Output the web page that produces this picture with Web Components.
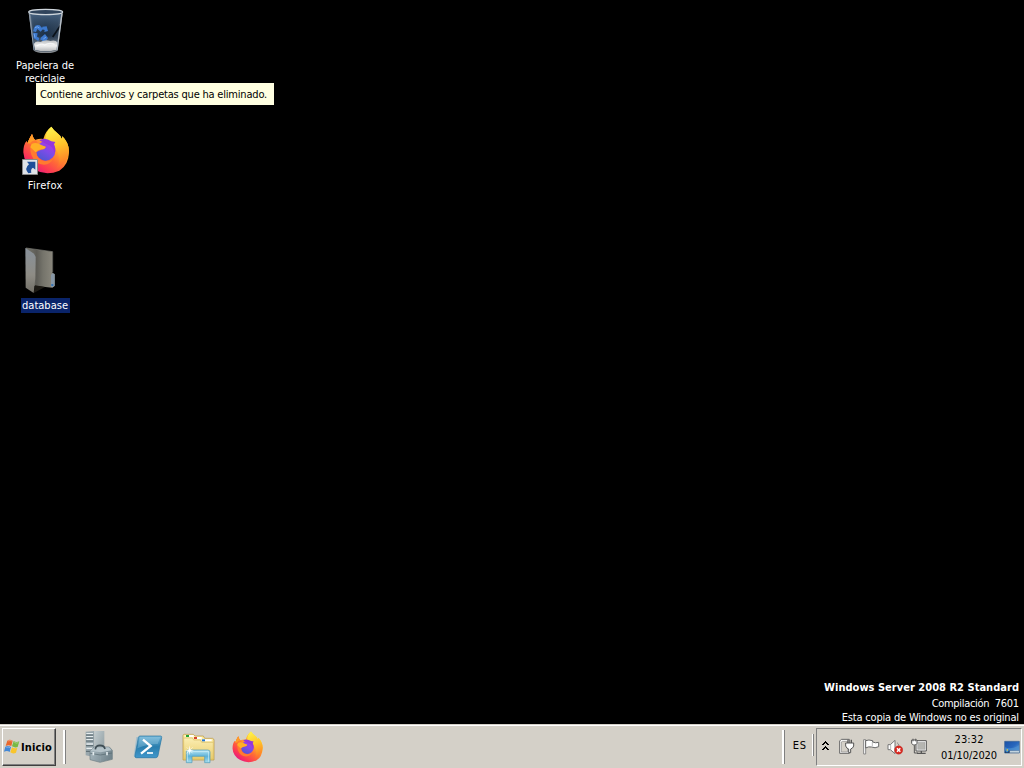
<!DOCTYPE html>
<html lang="es">
<head>
<meta charset="utf-8">
<title>Escritorio</title>
<style>
html,body{margin:0;height:100%;overflow:hidden;background:#000}
body{font:11px/13px "DejaVu Sans Condensed","DejaVu Sans",sans-serif;font-stretch:condensed}
</style>
</head>
<body>
<win-desktop></win-desktop>
<script>
const define=(name,html,ready)=>customElements.define(name,class extends HTMLElement{
  constructor(){super();this.attachShadow({mode:'open'}).innerHTML=html;}
  connectedCallback(){if(ready)ready.call(this);}
});

/* Single line label whose tracking is adjusted to a given advance width. */
define('fit-text','<style>:host{display:block;white-space:pre}span{display:inline-block}</style><span></span>',function(){
  const s=this.shadowRoot.querySelector('span'),t=this.getAttribute('text'),w=+this.getAttribute('width');
  s.textContent=t;
  const n=s.getBoundingClientRect().width;
  const k=(w-n)/t.length;
  s.style.letterSpacing=k+'px';
  s.style.marginRight=(-k)+'px';
});

const icons={
bin:`<svg viewBox="81 24 114 141"><defs>
<linearGradient id="a" x1="0" x2="1"><stop offset="0" stop-color="#8c9db0"/><stop offset=".16" stop-color="#34485e"/><stop offset=".5" stop-color="#1d344d"/><stop offset=".85" stop-color="#3b4c60"/><stop offset="1" stop-color="#9aa4ae"/></linearGradient>
<linearGradient id="b" x2="0" y2="1"><stop offset="0" stop-color="#45607e"/><stop offset=".6" stop-color="#182a3e" stop-opacity=".4"/><stop offset="1" stop-color="#dfe2e4"/></linearGradient>
<linearGradient id="c" x2="0" y2="1"><stop offset="0" stop-color="#b9bcbf"/><stop offset=".5" stop-color="#f0f0f0"/><stop offset="1" stop-color="#b4b6b8"/></linearGradient></defs>
<path d="M86 38L101 151Q104 158 137 158Q169 158 173 151L188 38Z" fill="url(#a)"/><path d="M92 42L106 150H168L183 42Z" fill="url(#b)"/>
<path d="M158 111L182 76" stroke="#0a1119" stroke-width="5"/>
<path d="M102 83Q106 72 119 76L129 87 122 95 112 87 108 96 99 94ZM127 80l13-1 4 14-11 3 1-6-8-2zM100 98l13 2-2 10 7 4-3 9-14-8zM122 113l13-11 9 12-7 11-10 1-1-6-5-1z" fill="#3d79cd"/><path d="M105 83q7-6 13 1M102 101l3 12M130 117l8-6" stroke="#73a8ef" stroke-width="3" fill="none"/>
<path d="M102 131Q108 122 121 126Q137 117 151 123Q167 119 173 128L169 150Q137 158 105 150Z" fill="url(#c)"/><path d="M110 138q12-9 24-3 14-8 30-2" stroke="#fff" stroke-width="4" fill="none" opacity=".7"/>
<path d="M88 41L102 151" stroke="#8d99a6" stroke-width="3"/><path d="M186 41L171 151" stroke="#b4bcc4" stroke-width="4"/>
<ellipse cx="137" cy="36" rx="51" ry="8" fill="#30445c" stroke="#cfd6dc" stroke-width="3.500"/><path d="M101 149Q136 160 173 149Q169 159 137 159Q104 159 101 149Z" fill="#85898d"/></svg>`,
firefox:`<svg viewBox="63 33 150 150"><defs>
<linearGradient id="a" x1=".85" y1=".05" x2=".2" y2=".95"><stop offset="0" stop-color="#fff44f"/><stop offset=".35" stop-color="#ffb329"/><stop offset=".6" stop-color="#ff6b36"/><stop offset=".83" stop-color="#fb3657"/><stop offset="1" stop-color="#e21587"/></linearGradient>
<linearGradient id="b" x1=".8" y1="0" x2=".2" y2="1"><stop offset="0" stop-color="#b833e1"/><stop offset=".5" stop-color="#7c4ce8"/><stop offset="1" stop-color="#4a57cf"/></linearGradient>
<linearGradient id="c" x1=".4" y1="0" x2=".6" y2="1"><stop offset="0" stop-color="#fff14b"/><stop offset=".45" stop-color="#ffc32a"/><stop offset=".8" stop-color="#ff8c28"/><stop offset="1" stop-color="#ff5f38" stop-opacity=".2"/></linearGradient></defs>
<path d="M154 35Q161 46 174 56Q181 60 185 72L187 64Q206 82 207 109Q206 151 178 167Q139 183 105 165Q72 146 70 112Q70 88 80 77L82 85Q88 70 96 57Q99 68 104 75Q120 70 130 72Q136 48 154 35Z" fill="url(#a)"/>
<path d="M154 35Q161 46 174 56Q181 60 185 72L187 64Q206 82 207 109Q205 148 168 163Q190 131 166 100Q162 84 137 76Q135 53 154 35Z" fill="url(#c)"/>
<circle cx="137" cy="108" r="29" fill="url(#b)"/>
<path d="M118 76Q135 65 154 79L166 81 162 88Q169 101 164 117Q162 94 139 87Z" fill="#9437dc"/>
<path d="M96 57Q99 69 106 76Q115 82 112 92L137 95Q137 102 124 104Q114 107 109 112Q111 134 132 138Q148 140 160 131Q152 147 132 149Q104 147 94 119Q88 101 94 88L82 85Q88 70 96 57Z" fill="#ff7a30"/><path d="M95 87Q108 79 124 90L137 95Q137 102 124 103Q112 105 107 112L91 97Z" fill="#ffaf25"/>
<path d="M96 57Q99 69 106 76Q95 77 89 85L82 85Q88 70 96 57Z" fill="#ff9c28"/></svg>`,
shortcut:`<svg viewBox="0 0 48 48"><path fill="#dfe3e8" stroke="#888" stroke-width="3" d="M1.500 1.500h45v45H1.500z"/><path d="M15 8H40V32L33 26Q25 30 28 41L19 43Q6 28 21 16Z" fill="#1e4f99"/></svg>`,
folder:`<svg viewBox="72 33 102 150"><defs><linearGradient id="a" x2="1"><stop offset="0" stop-color="#77776f"/><stop offset=".38" stop-color="#5d5c56"/><stop offset=".6" stop-color="#75746b"/><stop offset="1" stop-color="#8e8b80"/></linearGradient><linearGradient id="b" x2="0" y2="1"><stop offset="0" stop-color="#88919b"/><stop offset=".6" stop-color="#8e8c85"/><stop offset="1" stop-color="#716e66"/></linearGradient></defs>
<path d="M77 39L157 50V113L164 117V153L157 158 101 152Z" fill="url(#a)"/><path d="M105 151L135 156 101 174Z" fill="#1d1a14"/><path d="M76 39L102 56 107 66 106 129 101 174 77 158Z" fill="url(#b)"/><path d="M78 39L158 50V112" stroke="#82827a" stroke-width="2" fill="none"/><path d="M153 119l5-4 6 3v34l-6 5-5-2z" fill="#8797a6"/><path d="M154 147h6v6h-6z" fill="#3473b5"/></svg>`,
flag:`<svg viewBox="12 58 48 48"><path d="M22 66Q29 60 38 66L34 82Q26 78 17 82Z" fill="#e9662b"/><path d="M41 67Q49 73 58 68L53 85Q45 88 36 83Z" fill="#77b943"/><path d="M16 84Q24 80 33 85L29 100Q22 95 12 99Z" fill="#4387d5"/><path d="M36 86Q44 91 52 87L48 102Q39 107 31 101Z" fill="#f9c52c"/><path d="M24 67Q30 64 36 67M43 71Q49 75 55 72M19 86Q25 84 30 87" stroke="#fff" stroke-opacity=".5" stroke-width="2" fill="none"/></svg>`,
server:`<svg viewBox="252 36 90 102"><defs><linearGradient id="a" x2="1" y2="1"><stop offset="0" stop-color="#c2cccf"/><stop offset="1" stop-color="#8b999d"/></linearGradient><linearGradient id="b" x2="1" y2=".3"><stop offset="0" stop-color="#a9b9c0"/><stop offset="1" stop-color="#74868e"/></linearGradient></defs>
<path d="M257 41L283 39V118L257 112Z" fill="#98a6ac"/><path d="M283 39H313V112L283 118Z" fill="url(#a)"/><path d="M259 47h20M259 56h20M259 65h20M259 78h20M259 91h20" stroke="#e6edef" stroke-width="4"/><path d="M258 51h22M258 60h22M258 69h22M258 83h22M258 100h12" stroke="#56666d" stroke-width="3"/>
<path d="M270 99L283 87H328L337 97V124L300 133 270 125Z" fill="url(#b)" stroke="#6d7d84" stroke-width="2"/><path d="M271 98L284 88H327L335 97 302 103Z" fill="#b4c2c8"/><path d="M286 94Q287 82 300 82Q313 82 315 93" fill="none" stroke="#3f4d54" stroke-width="5"/>
<path d="M271 106L301 111 336 105" fill="none" stroke="#56686f" stroke-width="2"/><path d="M280 102v10M321 102v10" stroke="#e1eaed" stroke-width="5"/><path d="M301 113v18" stroke="#91a1a7" stroke-width="2"/></svg>`,
shell:`<svg viewBox="24 48 90 81"><defs><linearGradient id="a" x2="0" y2="1"><stop offset="0" stop-color="#72b5d7"/><stop offset=".5" stop-color="#297eae"/><stop offset="1" stop-color="#4197cb"/></linearGradient></defs><path d="M34 57L26 114 33 121H94L111 60Z" fill="#a6c0cd"/><path d="M45 54H107Q111 54 110 59L99 113Q98 119 92 119H34Q28 119 30 112L40 59Q41 54 45 54Z" fill="url(#a)" stroke="#2875a1" stroke-width="2"/><path d="M45 57H106L98 78Q68 77 37 91Z" fill="#b4dded" opacity=".3"/><path d="M54 65L77 84 48 107" fill="none" stroke="#fff" stroke-width="7"/><path d="M66 105h18" stroke="#fff" stroke-width="5"/></svg>`,
explorer:`<svg viewBox="168 42 105 96"><defs><linearGradient id="a" x2="0" y2="1"><stop offset="0" stop-color="#fff1ac"/><stop offset="1" stop-color="#e7c75d"/></linearGradient><linearGradient id="b" x2="0" y2="1"><stop offset="0" stop-color="#b4e3f2"/><stop offset=".5" stop-color="#5fb3d8"/><stop offset="1" stop-color="#a4dcec"/></linearGradient><linearGradient id="c" x2="0" y2="1"><stop offset="0" stop-color="#fbeeb2"/><stop offset="1" stop-color="#e9cc6c"/></linearGradient></defs>
<path d="M174 126V53Q174 49 178 49H205L210 54H235L239 61H263Q267 62 267 67V126Z" fill="url(#a)" stroke="#b5913e" stroke-width="2"/><path d="M182 51h24v6h-24zM206 57h24v6h-24zM230 64h30v6h-30z" fill="#fff"/><path d="M183 51h9v6h-9z" fill="#22a435"/><path d="M207 57h9v6h-9z" fill="#d44330"/><path d="M231 64h9v6h-9z" fill="#2475d0"/><path d="M176 60H202L206 66H226L230 73H265V124H176Z" fill="url(#c)" stroke="#d9bd66" stroke-width="2"/>
<path d="M184 134V101Q184 96 190 96H248Q255 96 255 102V134H239V115H201V134Z" fill="url(#b)" stroke="#4c98ba" stroke-width="2"/><path d="M187 130V101H251V131" fill="none" stroke="#d8f4fb" stroke-width="2"/><path d="M194 82L196 95 207 97 196 99 194 112 192 99 180 97 192 95Z" fill="#fff"/><path d="M185 88L203 106M203 88L185 106" stroke="#fff" stroke-width="1.500"/></svg>`,
chevron:`<svg viewBox="0 0 7 9"><path d="M3 0h1v1h1v1h1v1h1v1H5V3H4V2H3v1H2v1H0V3h1V2h1V1h1zM3 5h1v1h1v1h1v1h1v1H5V8H4V7H3v1H2v1H0V8h1V7h1V6h1z"/></svg>`,
plug:`<svg viewBox="204 60 51 51"><path d="M209 69L214 64H238V106H209Z" fill="#fff" stroke="#666" stroke-width="3"/><path d="M214 72V102H233V70H217Z" fill="#d4d0c8" stroke="#888" stroke-width="2"/><path d="M234 65V75M244 65V75" stroke="#555" stroke-width="4"/><path d="M227 75H251V84Q249 91 242 93V104H236V93Q229 91 227 84Z" fill="#fff" stroke="#555" stroke-width="3"/></svg>`,
action:`<svg viewBox="276 60 54 51"><path d="M281 65H287V108H281Z" fill="#fff" stroke="#777" stroke-width="2.500"/><path d="M287 68Q296 64 308 68V72Q316 76 326 73V86Q315 92 305 87Q295 85 287 90Z" fill="#fff" stroke="#666" stroke-width="3"/><path d="M307 72V84" stroke="#999" stroke-width="2"/></svg>`,
sound:`<svg viewBox="0 0 48 48"><path d="M3 17H10L24 4V44L10 32H3Z" fill="#fff" stroke="#777" stroke-width="3"/><path d="M11 17V32" stroke="#999" stroke-width="2"/><path d="M30 11Q35 14 36 20" stroke="#888" stroke-width="3" fill="none"/><circle cx="35" cy="33" r="12.500" fill="#d92a21" stroke="#ad211b"/><path d="M30 28L40 38M40 28L30 38" stroke="#fff" stroke-width="4.500"/></svg>`,
network:`<svg viewBox="48 60 54 51"><path d="M66 68H97V99H66Z" fill="#fff" stroke="#555" stroke-width="3"/><path d="M71 73H93V94H71Z" fill="#b5b5b1" stroke="#999" stroke-width="1.500"/><path d="M69 106H95M82 99V105" stroke="#555" stroke-width="4"/><path d="M53 66H69V76L64 81H58L53 76Z" fill="#fff" stroke="#555" stroke-width="3"/><path d="M57 62V70M65 62V70" stroke="#555" stroke-width="2.500"/><path d="M61 82V105H72" fill="none" stroke="#555" stroke-width="3"/></svg>`,
desk:`<svg viewBox="330 66 48 45"><defs><linearGradient id="a" x2="1" y2="1"><stop offset="0" stop-color="#1b50a6"/><stop offset=".5" stop-color="#2767bd"/><stop offset="1" stop-color="#73abdf"/></linearGradient></defs><path d="M332 70H376V105H332Z" fill="url(#a)" stroke="#355f91" stroke-width="2"/><path d="M333 88Q352 96 375 82V97H333Z" fill="#4d91d0" opacity=".7"/><path d="M333 98H375V104H333Z" fill="#1b2f49"/><path d="M347 98H375V104H347Z" fill="#c3d4de"/><circle cx="339" cy="98" r="5" fill="#3d8cd0"/><path d="M338 94h4v4h-4z" fill="#e5c640"/></svg>`
};

define('ui-icon','',function(){
  const w=this.getAttribute('w'),h=this.getAttribute('h');
  this.shadowRoot.innerHTML=`<style>:host{display:block;flex:none;width:${w}px;height:${h}px}svg{display:block;width:100%;height:100%}</style>`+icons[this.getAttribute('name')];
});

define('desktop-item',`<style>
:host{position:absolute;width:76px;height:84px;color:#fff;display:block}
.pic{position:relative;height:51px;display:flow-root}
:host([selected]) .pic{height:50px}
.label{display:flex;flex-direction:column;align-items:center}
:host([selected]) .label{background:#0a246a;width:49px;height:15px;margin:0 auto;justify-content:center}
</style><div class="pic"><slot name="icon"></slot></div><div class="label"><slot></slot></div>`);

define('tool-tip',`<style>:host{position:absolute;display:block;box-sizing:border-box;background:#ffffe1;color:#000;height:22px;width:238px;padding:5px 4px 4px}</style><slot></slot>`);

define('task-separator',`<style>:host{display:block;flex:none;box-sizing:border-box;width:3px;height:34px;background:#fff;border-right:1px solid #808080}:host([thin]){width:2px;height:22px}</style>`);

define('start-button',`<style>:host{display:flex;flex:none;align-items:center;box-sizing:border-box;width:54px;height:38px;border:1px solid;border-color:#fff #404040 #404040 #fff;box-shadow:inset -1px -1px #808080;padding-left:1px;gap:1px;font-weight:bold}</style>
<ui-icon name="flag" w="16" h="16" style="margin-top:-2px"></ui-icon><fit-text text="Inicio" width="31"></fit-text>`);

define('system-tray',`<style>:host{display:flex;flex:none;align-items:center;box-sizing:border-box;width:206px;height:38px;border:1px solid;border-color:#808080 #fff #fff #808080;padding-left:5px}
.clock{width:60px;display:flex;flex-direction:column;align-items:center;gap:3px;margin-left:11px}</style>
<ui-icon name="chevron" w="7" h="9" style="margin-top:-3px"></ui-icon>
<ui-icon name="plug" w="17" h="17" style="margin:-1px 0 0 9px"></ui-icon>
<ui-icon name="action" w="18" h="17" style="margin:-1px 0 0 7px"></ui-icon>
<ui-icon name="sound" w="16" h="16" style="margin-left:7px"></ui-icon>
<ui-icon name="network" w="18" h="17" style="margin:-1px 0 0 7px"></ui-icon>
<div class="clock"><fit-text text="23:32" width="29"></fit-text><fit-text text="01/10/2020" width="56"></fit-text></div>
<ui-icon name="desk" w="16" h="15" style="margin:1px 0 0 5px"></ui-icon>`);

define('task-bar',`<style>:host{display:flex;align-items:center;box-sizing:border-box;height:44px;background:#d4d0c8;color:#000;border-top:1px solid #d4d0c8;box-shadow:inset 0 1px #fff;padding:3px 2px 2px}
.gap{flex:1}</style>
<start-button></start-button>
<task-separator style="margin-left:7px"></task-separator>
<ui-icon name="server" w="30" h="34" style="margin-left:18px"></ui-icon>
<ui-icon name="shell" w="30" h="27" style="margin:1px 0 0 19px"></ui-icon>
<ui-icon name="explorer" w="35" h="32" style="margin:2px 0 0 18px"></ui-icon>
<ui-icon name="firefox" w="33" h="33" style="margin:1px 0 0 15px"></ui-icon>
<div class="gap"></div>
<task-separator></task-separator>
<fit-text text="ES" width="14" style="margin:-3px 6px 0 8px"></fit-text>
<task-separator thin style="margin-top:-4px"></task-separator>
<system-tray style="margin-left:2px"></system-tray>`);

define('build-notice',`<style>:host{display:flex;flex-direction:column;align-items:flex-end;color:#fff;padding:0 5px 0 0}</style>
<fit-text text="Windows Server 2008 R2 Standard" width="195" style="font-weight:bold;margin-bottom:3px"></fit-text>
<fit-text text="Compilación  7601" width="87" style="margin-bottom:1px"></fit-text>
<fit-text text="Esta copia de Windows no es original" width="177"></fit-text>`);

define('win-desktop',`<style>:host{display:flex;flex-direction:column;justify-content:flex-end;position:relative;width:1024px;height:768px;background:#000;overflow:hidden}
.at{position:absolute}</style>
<desktop-item style="left:7px;top:8px"><ui-icon slot="icon" name="bin" w="38" h="47" style="margin-left:20px"></ui-icon>
<fit-text text="Papelera de" width="58"></fit-text><fit-text text="reciclaje" width="40"></fit-text></desktop-item>
<desktop-item style="left:7px;top:128px"><ui-icon slot="icon" name="firefox" w="50" h="50" style="margin:-2px 0 0 14px"></ui-icon><ui-icon class="at" slot="icon" name="shortcut" w="16" h="16" style="left:15px;top:31px"></ui-icon>
<fit-text text="Firefox" width="35"></fit-text></desktop-item>
<desktop-item selected style="left:7px;top:248px"><ui-icon slot="icon" name="folder" w="34" h="50" style="margin:-2px 0 0 17px"></ui-icon>
<fit-text text="database" width="46"></fit-text></desktop-item>
<tool-tip style="left:36px;top:83px"><fit-text text="Contiene archivos y carpetas que ha eliminado." width="227"></fit-text></tool-tip>
<build-notice></build-notice>
<task-bar></task-bar>`);
</script>
</body>
</html>
